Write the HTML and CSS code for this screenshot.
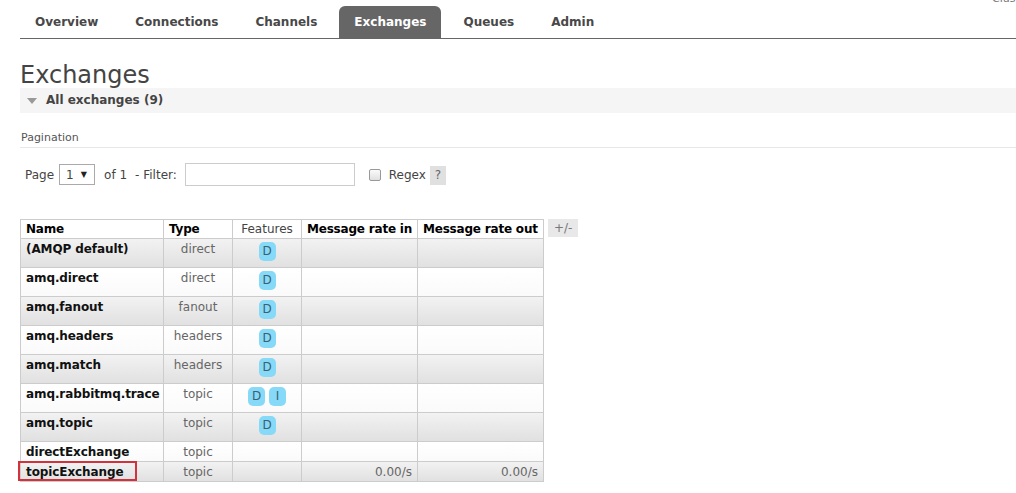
FILE: index.html
```html
<!DOCTYPE html>
<html>
<head>
<meta charset="utf-8">
<link rel="stylesheet" href="styles.css">
</head>
<body>
<div class="cluster">Cluster rabbit@localhost</div>
<nav class="tabs">
  <a class="tab">Overview</a>
  <a class="tab">Connections</a>
  <a class="tab">Channels</a>
  <a class="tab active">Exchanges</a>
  <a class="tab">Queues</a>
  <a class="tab">Admin</a>
</nav>
<main class="main">
  <h1 class="title">Exchanges</h1>
  <div class="section-head"><span class="tri"></span>All exchanges (9)</div>
  <div class="pag-label">Pagination</div>
  <div class="controls">
    <span>Page</span>
    <span class="select">1 <span class="arrow">&#9660;</span></span>
    <span class="of">of 1</span>
    <span>- Filter:</span>
    <span class="input"></span>
    <span class="check"></span>
    <span class="regex">Regex</span>
    <span class="help">?</span>
  </div>
  <div class="table-wrap">
    <table class="list">
      <thead>
        <tr>
          <th class="c-name">Name</th>
          <th class="c-type">Type</th>
          <th class="c-feat">Features</th>
          <th class="c-in">Message rate in</th>
          <th class="c-out">Message rate out</th>
        </tr>
      </thead>
      <tbody>
        <tr class="alt"><td class="name">(AMQP default)</td><td class="type">direct</td><td class="feat"><span class="badge">D</span></td><td></td><td></td></tr>
        <tr><td class="name">amq.direct</td><td class="type">direct</td><td class="feat"><span class="badge">D</span></td><td></td><td></td></tr>
        <tr class="alt"><td class="name">amq.fanout</td><td class="type">fanout</td><td class="feat"><span class="badge">D</span></td><td></td><td></td></tr>
        <tr><td class="name">amq.headers</td><td class="type">headers</td><td class="feat"><span class="badge">D</span></td><td></td><td></td></tr>
        <tr class="alt"><td class="name">amq.match</td><td class="type">headers</td><td class="feat"><span class="badge">D</span></td><td></td><td></td></tr>
        <tr><td class="name">amq.rabbitmq.trace</td><td class="type">topic</td><td class="feat"><span class="badge">D</span><span class="badge">I</span></td><td></td><td></td></tr>
        <tr class="alt"><td class="name">amq.topic</td><td class="type">topic</td><td class="feat"><span class="badge">D</span></td><td></td><td></td></tr>
        <tr><td class="name">directExchange</td><td class="type">topic</td><td class="feat"></td><td></td><td></td></tr>
        <tr class="alt"><td class="name marked">topicExchange<span class="mark"></span></td><td class="type">topic</td><td class="feat"></td><td class="rate">0.00/s</td><td class="rate">0.00/s</td></tr>
      </tbody>
    </table>
    <span class="toggle">+/-</span>
  </div>
</main>
</body>
</html>
```

FILE: styles.css
```css
html, body {
  margin: 0;
  padding: 0;
  background: #fff;
  overflow: hidden;
}
body {
  font-family: "DejaVu Sans", Verdana, sans-serif;
  font-size: 12px;
  color: #444;
  position: relative;
  height: 493px;
}
.cluster {
  position: absolute;
  left: 992px;
  top: -8px;
  font-size: 11px;
  color: #777;
  white-space: nowrap;
}
.tabs {
  display: flex;
  gap: 7px;
  margin: 6px 0 0 20px;
  border-bottom: 1px solid #666;
  height: 32px;
}
.tab {
  display: block;
  padding: 0 15px;
  line-height: 33px;
  font-weight: bold;
  font-size: 12px;
  color: #484848;
  border-radius: 6px 6px 0 0;
}
.tab.active {
  background: #666;
  color: #fff;
}
.main {
  padding: 0 0 0 20px;
}
.title {
  margin: 22px 0 0 0;
  font-size: 24px;
  font-weight: normal;
  line-height: 28px;
  color: #444;
  height: 27px;
}
.section-head {
  background: #f5f5f5;
  height: 25px;
  line-height: 25px;
  font-weight: bold;
  font-size: 12px;
  color: #444;
  display: flex;
  align-items: center;
}
.tri {
  width: 0;
  height: 0;
  border-left: 5px solid transparent;
  border-right: 5px solid transparent;
  border-top: 6px solid #999;
  margin: 0 9px 0 7px;
}
.pag-label {
  margin-top: 18px;
  font-size: 11px;
  color: #555;
  padding: 0 0 3px 1px;
  border-bottom: 1px solid #e8e8e8;
  line-height: 13px;
}
.controls {
  display: flex;
  align-items: center;
  margin-top: 15px;
  padding-left: 5px;
  height: 23px;
  font-size: 12px;
  color: #444;
}
.select {
  display: inline-flex;
  align-items: center;
  height: 21px;
  width: 36px;
  box-sizing: border-box;
  border: 1px solid #aaa;
  padding-left: 6px;
  margin-left: 5px;
  gap: 7px;
}
.arrow {
  font-size: 8px;
  color: #222;
}
.of {
  margin: 0 8px 0 9px;
}
.input {
  width: 170px;
  height: 23px;
  box-sizing: border-box;
  border: 1px solid #ccc;
  margin-left: 8px;
}
.check {
  width: 12px;
  height: 12px;
  box-sizing: border-box;
  border: 1px solid #999;
  border-radius: 2px;
  background: linear-gradient(#fafafa, #e0e0e0);
  margin-left: 14px;
}
.regex {
  margin-left: 8px;
}
.help {
  background: #e0e0e0;
  color: #666;
  width: 16px;
  height: 19px;
  line-height: 19px;
  text-align: center;
  margin-left: 4px;
  margin-top: 2px;
}
.table-wrap {
  display: flex;
  align-items: flex-start;
  gap: 4px;
  margin-top: 33px;
}
.list {
  border-collapse: collapse;
  table-layout: fixed;
  width: 523px;
  font-size: 12px;
}
.list th, .list td {
  border: 1px solid #ccc;
  padding: 3px 5px 1px;
  line-height: 15px;
  vertical-align: top;
  white-space: nowrap;
  overflow: visible;
}
.list th {
  text-align: left;
  color: #000;
  background: #fff;
  padding: 2px 5px 1px;
  letter-spacing: -0.2px;
}
.list th.c-feat {
  font-weight: normal;
  color: #444;
  text-align: center;
  letter-spacing: 0;
}
.c-name { width: 132px; }
.c-type { width: 58px; }
.c-feat { width: 58px; }
.c-in { width: 105px; }
.c-out { width: 115px; }
.list tbody tr {
  background: linear-gradient(#fff, #fafafa);
}
.list tbody tr.alt {
  background: linear-gradient(#f2f2f2, #e0e0e0);
}
.name {
  font-weight: bold;
  color: #111;
  letter-spacing: -0.1px;
}
.marked {
  position: relative;
}
.mark {
  position: absolute;
  left: -3px;
  top: -1px;
  width: 119px;
  height: 20px;
  box-sizing: border-box;
  border: 2px solid #d2323c;
}
.type {
  text-align: center;
  color: #666;
}
.feat {
  text-align: center;
}
.badge {
  display: inline-block;
  vertical-align: top;
  width: 17px;
  height: 19px;
  line-height: 19px;
  margin: 0 2px 5px;
  border-radius: 5px;
  background: #86daf7;
  color: #3a6073;
  font-size: 12px;
  text-align: center;
}
.rate {
  text-align: right;
  color: #666;
}
.toggle {
  background: #e8e8e8;
  color: #777;
  padding: 0 6px;
  height: 18px;
  line-height: 18px;
  font-size: 12px;
}
```
